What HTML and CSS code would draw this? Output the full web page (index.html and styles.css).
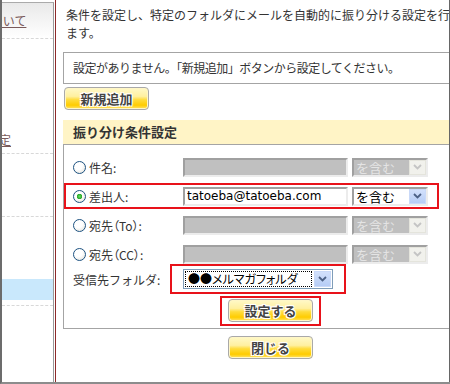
FILE: index.html
```html
<!DOCTYPE html>
<html lang="ja">
<head>
    <meta charset="UTF-8">
    <meta name="viewport" content="width=device-width, initial-scale=1.0">
    <title>振り分け設定</title>
    <link rel="stylesheet" href="styles.css">
</head>
<body>
    <div class="frame">
        <div class="side">
            <div class="side-head"><a class="side-link side-link-first" href="#">メールフィルタについて</a></div>
            <div class="side-item side-item-tall"><a class="side-link side-link-second" href="#">振り分け設定</a></div>
            <div class="side-item side-item-mid"></div>
            <div class="side-item side-item-sel"><div class="side-current"></div></div>
            <div class="side-item"></div>
        </div>
        <div class="rule"></div>
        <div class="main">
            <div class="content">
                <p class="intro">条件を設定し、特定のフォルダにメールを自動的に振り分ける設定を行います。</p>
                <div class="notice">設定がありません。「新規追加」ボタンから設定してください。</div>
                <button class="btn btn-add">新規追加</button>

                <h2 class="section-title">振り分け条件設定</h2>
                <div class="form-box">
                    <div class="row">
                        <label class="row-label"><input type="radio" name="cond" class="radio"> 件名:</label>
                        <input type="text" class="field" disabled>
                        <div class="combo combo-off">
                            <span class="combo-text">を含む</span>
                            <span class="combo-btn"><svg width="9" height="6" viewBox="0 0 9 6"><path d="M1 1l3.5 3.5L8 1" fill="none" stroke="currentColor" stroke-width="1.8"/></svg></span>
                        </div>
                    </div>
                    <div class="row row-active">
                        <label class="row-label"><input type="radio" name="cond" class="radio" checked> 差出人:</label>
                        <input type="text" class="field field-on" value="tatoeba@tatoeba.com">
                        <div class="combo">
                            <span class="combo-text">を含む</span>
                            <span class="combo-btn"><svg width="9" height="6" viewBox="0 0 9 6"><path d="M1 1l3.5 3.5L8 1" fill="none" stroke="currentColor" stroke-width="1.8"/></svg></span>
                        </div>
                    </div>
                    <div class="row">
                        <label class="row-label"><input type="radio" name="cond" class="radio"> 宛先（To）:</label>
                        <input type="text" class="field" disabled>
                        <div class="combo combo-off">
                            <span class="combo-text">を含む</span>
                            <span class="combo-btn"><svg width="9" height="6" viewBox="0 0 9 6"><path d="M1 1l3.5 3.5L8 1" fill="none" stroke="currentColor" stroke-width="1.8"/></svg></span>
                        </div>
                    </div>
                    <div class="row">
                        <label class="row-label"><input type="radio" name="cond" class="radio"> 宛先（CC）:</label>
                        <input type="text" class="field" disabled>
                        <div class="combo combo-off">
                            <span class="combo-text">を含む</span>
                            <span class="combo-btn"><svg width="9" height="6" viewBox="0 0 9 6"><path d="M1 1l3.5 3.5L8 1" fill="none" stroke="currentColor" stroke-width="1.8"/></svg></span>
                        </div>
                    </div>
                    <div class="row-folder">
                        <span class="folder-label">受信先フォルダ:</span>
                        <div class="mark-frame folder-frame">
                            <div class="folder-select">
                                <span class="folder-text">●●メルマガフォルダ</span>
                                <span class="combo-btn"><svg width="9" height="6" viewBox="0 0 9 6"><path d="M1 1l3.5 3.5L8 1" fill="none" stroke="currentColor" stroke-width="1.8"/></svg></span>
                            </div>
                        </div>
                    </div>
                    <div class="submit-wrap">
                        <div class="mark-frame submit-frame">
                            <button class="btn">設定する</button>
                        </div>
                    </div>
                </div>

                <div class="close-wrap">
                    <button class="btn">閉じる</button>
                </div>
            </div>
        </div>
    </div>
</body>
</html>
```

FILE: styles.css
```css
body {
    margin: 0;
    font-family: "Noto Sans CJK JP", "Noto Sans", sans-serif;
    font-size: 12px;
    color: #333;
    background: #fff;
}

.frame {
    display: flex;
    width: 450px;
    height: 384px;
    box-sizing: border-box;
    border-left: 2px solid #6c6c6c;
    border-bottom: 2px solid #8c8c8c;
    overflow: hidden;
}

/* left menu (scrolled sideways, only the ends show) */
.side {
    width: 51px;
    margin-top: 2px;
    border-top: 1px solid #aaa;
    border-right: 1px solid #9a9a9a;
    overflow: hidden;
    flex-shrink: 0;
}

.side-head {
    height: 35px;
    box-sizing: border-box;
    padding-top: 11px;
    background: linear-gradient(to bottom, #e9e9e9, #fff);
}

.side-link {
    display: block;
    white-space: nowrap;
    line-height: 14px;
    color: #7a5a5a;
    text-decoration: underline;
}

.side-link-first {
    margin-left: -107px;
}

.side-link-second {
    margin-left: -63px;
}

.side-item {
    border-top: 1px dashed #d8d8d8;
}

.side-item-tall {
    height: 115px;
    box-sizing: border-box;
    padding-top: 94px;
}

.side-item-mid {
    height: 62px;
}

.side-item-sel {
    height: 89px;
    box-sizing: border-box;
    padding-top: 62px;
}

.side-current {
    height: 21px;
    background: #c9e8fc;
}

.rule {
    width: 1px;
    margin-left: 1px;
    background: #8e2a2a;
    flex-shrink: 0;
}

/* main panel */
.main {
    flex: 1;
    border-right: 1px solid #666;
    overflow: hidden;
}

.content {
    width: 429px;
    box-sizing: border-box;
    padding: 6px 7px 0;
}

.intro {
    margin: 0;
    padding: 0 12px 0 3px;
    line-height: 18px;
}

.notice {
    margin-top: 10px;
    border: 1px solid #a4a4a4;
    padding: 6px 9px;
    line-height: 18px;
    letter-spacing: -0.5px;
    white-space: nowrap;
}

.btn {
    display: block;
    width: 85px;
    height: 23px;
    padding: 0;
    border: 1px solid #a9a9a9;
    border-radius: 4px;
    background: linear-gradient(to bottom, #fff9c8 0%, #fff0a0 40%, #ffdc3c 56%, #ffcc00 82%, #ffe46a 100%);
    box-shadow: inset 0 0 0 1px #fff6c6;
    font-family: inherit;
    font-size: 13px;
    font-weight: bold;
    color: #444;
    text-shadow: -1px -1px 0 #fff, 1px -1px 0 #fff, -1px 1px 0 #fff, 1px 1px 0 #fff, 0 0 3px #fff;
    cursor: pointer;
}

.btn-add {
    margin: 3px 0 0 1px;
}

.section-title {
    margin: 10px 0 0;
    height: 24px;
    padding-left: 10px;
    line-height: 24px;
    font-size: 13px;
    font-weight: bold;
    color: #333;
    background: #fff4c6;
}

.form-box {
    border: 1px solid #a4a4a4;
    padding: 9px 0 2px;
}

.row {
    display: flex;
    align-items: center;
    width: 375px;
    height: 26px;
    box-sizing: border-box;
    border: 2px solid transparent;
    padding-left: 7px;
}

.row + .row {
    margin-top: 3px;
}

.row-active,
.mark-frame {
    border: 2px solid #e8121a;
}

.row-label {
    display: flex;
    align-items: center;
    gap: 3px;
    width: 110px;
    white-space: nowrap;
    font-feature-settings: "palt";
}

.radio {
    appearance: none;
    width: 13px;
    height: 13px;
    margin: 0;
    border: 1px solid #1d5281;
    border-radius: 50%;
    background: radial-gradient(circle at 40% 35%, #fff 0, #fff 40%, #dcdcd4 100%);
    box-sizing: border-box;
}

.radio:checked {
    background: radial-gradient(circle, #62e062 0, #27a527 2.5px, transparent 3px),
                radial-gradient(circle at 40% 35%, #fff 0, #fff 40%, #dcdcd4 100%);
}

.field {
    width: 165px;
    height: 19px;
    margin: 0;
    box-sizing: border-box;
    border: 2px solid;
    border-color: #a0a0a0 #ececec #ececec #a0a0a0;
    background: #c0c0c0;
    padding: 0 2px;
    font-family: "DejaVu Sans", sans-serif;
    font-size: 12px;
    color: #000;
}

.field-on {
    background: #fff;
}

.combo {
    display: flex;
    width: 76px;
    height: 19px;
    margin-left: 4px;
    box-sizing: border-box;
    border: 2px solid;
    border-color: #a0a0a0 #ececec #ececec #a0a0a0;
    background: #fff;
}

.combo-text {
    flex: 1;
    padding-left: 2px;
    line-height: 15px;
    font-size: 13px;
    color: #000;
}

.combo-btn {
    display: flex;
    align-items: center;
    justify-content: center;
    width: 17px;
    color: #4c6186;
    background: linear-gradient(to bottom, #d4e2fc, #b4cbf5);
    box-shadow: inset 0 0 0 1px #c9d9f8;
}

.combo-off {
    background: #bfbfbf;
}

.combo-off .combo-text {
    color: #e4e4e4;
}

.combo-off .combo-btn {
    color: #c4c4c4;
    background: #f1f1ec;
    box-shadow: inset 0 0 0 1px #e4e4dc;
}

.row-folder {
    display: flex;
    align-items: center;
    margin-top: -3px;
    padding-left: 9px;
}

.folder-label {
    width: 97px;
    white-space: nowrap;
}

.folder-frame {
    padding: 3px 11px;
}

.folder-select {
    display: flex;
    width: 150px;
    height: 20px;
    box-sizing: border-box;
    border: 1px solid #7f9db9;
    padding: 1px;
    background: #fff;
}

.folder-text {
    flex: 1;
    margin-right: 2px;
    border: 1px dotted #000;
    padding-left: 2px;
    line-height: 14px;
    font-size: 12px;
    color: #000;
    font-feature-settings: "palt";
    white-space: nowrap;
}

.submit-wrap {
    display: flex;
    justify-content: center;
    margin-top: 2px;
}

.submit-frame {
    padding: 1px 6px 2px;
}

.close-wrap {
    display: flex;
    justify-content: center;
    margin-top: 7px;
}
```
